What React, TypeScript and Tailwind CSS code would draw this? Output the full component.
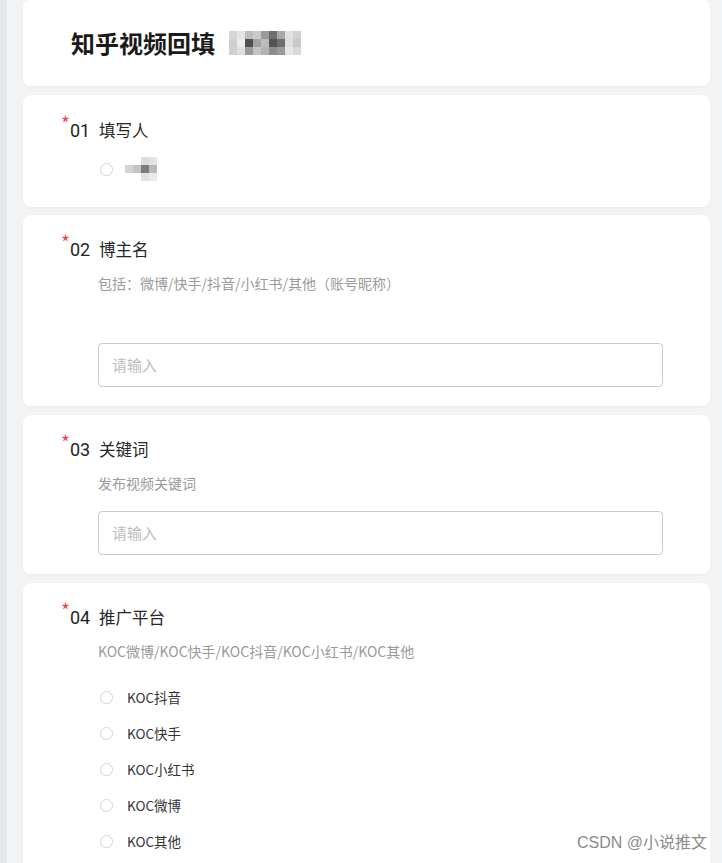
import React from "react";

const cjk = { fontFamily: '"Noto Sans CJK SC", "Noto Sans", sans-serif' };
const num = { fontFamily: 'Roboto, "Noto Sans CJK SC", sans-serif' };

// mosaic blocks standing in for the blurred names
const titleBlur = [
  ["#d6d6d6", "#e4e4e4", "#bdbdbd", "#c9c9c9", "#9a9a9a", "#6f6f6f", "#a8a8a8", "#e0e0e0", "#d2d2d2"],
  ["#cfcfcf", "#ececec", "#4f4f4f", "#a3a3a3", "#bcbcbc", "#545454", "#6e6e6e", "#dedede", "#c8c8c8"],
  ["#d0d0d0", "#dedede", "#9b9b9b", "#c4c4c4", "#b2b2b2", "#8e8e8e", "#9a9a9a", "#e6e6e6", "#d9d9d9"],
];

const nameBlur = [
  ["transparent", "transparent", "#dcdcdc", "#e4e4e4"],
  ["#d4d4d4", "#c4c4c4", "#7d7d7d", "#bababa"],
  ["transparent", "transparent", "#e2e2e2", "#eaeaea"],
];

const Mosaic = ({ rows, size }: { rows: string[][]; size: number }) => (
  <div className="flex flex-col">
    {rows.map((row, i) => (
      <div key={i} className="flex">
        {row.map((c, j) => (
          <div key={j} style={{ width: size, height: size, background: c }} />
        ))}
      </div>
    ))}
  </div>
);

const Radio = () => (
  <span className="w-[13px] h-[13px] rounded-full border border-[#d4d4d4] bg-white shrink-0" />
);

const Title = ({ no, text }: { no: string; text: string }) => (
  <div className="flex items-center h-6 relative">
    <span className="absolute -left-[9px] -top-[5px] text-[#e5484d] text-[19px] leading-none">*</span>
    <span style={num} className="text-[18px] text-[#1f1f1f] w-[29px]">
      {no}
    </span>
    <span className="text-[16.5px] text-[#262626]">{text}</span>
  </div>
);

const Input = () => (
  <div className="ml-[28px] mr-[47px] h-[44px] border border-[#c9cacd] rounded-[4px] flex items-center px-[13px] text-[15px] text-[#bdbdbd]">
    请输入
  </div>
);

const Option = ({ label }: { label: string }) => (
  <div className="h-9 flex items-center ml-[30px] gap-[14px]">
    <Radio />
    <span className="text-[13.5px] text-[#333]">{label}</span>
  </div>
);

const card = "bg-white rounded-[8px] pl-[47px] shadow-[0_1px_3px_rgba(0,0,0,0.03)]";

export default function App() {
  return (
    <div style={cjk} className="w-[722px] h-[863px] overflow-hidden bg-[#f2f3f5] flex relative">
      <div className="w-[7px] bg-[#e6e7e9] shrink-0" />
      <div className="w-[687px] ml-[16px] flex flex-col">
        {/* header */}
        <div className="h-[86px] bg-white rounded-b-[8px] rounded-t-[6px] flex items-center pl-[48px] gap-[14px] shadow-[0_1px_3px_rgba(0,0,0,0.03)]">
          <h1 className="text-[24px] font-bold text-[#1a1a1a]">知乎视频回填</h1>
          <Mosaic rows={titleBlur} size={8} />
        </div>

        {/* 01 */}
        <div className={`mt-[9px] h-[112px] pt-[23px] ${card}`}>
          <Title no="01" text="填写人" />
          <div className="mt-[9px] h-9 flex items-center ml-[30px] gap-[12px]">
            <Radio />
            <Mosaic rows={nameBlur} size={8} />
          </div>
        </div>

        {/* 02 */}
        <div className={`mt-[8px] h-[191px] pt-[22px] ${card}`}>
          <Title no="02" text="博主名" />
          <p className="mt-[12px] ml-[28px] h-5 leading-5 text-[14px] text-[#9a9a9a]">
            包括：微博/快手/抖音/小红书/其他（账号昵称）
          </p>
          <div className="mt-[50px]">
            <Input />
          </div>
        </div>

        {/* 03 */}
        <div className={`mt-[9px] h-[159px] pt-[22px] ${card}`}>
          <Title no="03" text="关键词" />
          <p className="mt-[12px] ml-[28px] h-5 leading-5 text-[14px] text-[#9a9a9a]">发布视频关键词</p>
          <div className="mt-[18px]">
            <Input />
          </div>
        </div>

        {/* 04 */}
        <div className={`mt-[9px] flex-1 pt-[22px] rounded-b-none ${card}`}>
          <Title no="04" text="推广平台" />
          <p className="mt-[12px] ml-[28px] h-5 leading-5 text-[14px] text-[#9a9a9a]">
            KOC微博/KOC快手/KOC抖音/KOC小红书/KOC其他
          </p>
          <div className="mt-[18px] flex flex-col">
            {["KOC抖音", "KOC快手", "KOC小红书", "KOC微博", "KOC其他"].map((o) => (
              <Option key={o} label={o} />
            ))}
          </div>
        </div>
      </div>

      <span
        style={{ fontFamily: '"Liberation Sans", "Noto Sans CJK SC", sans-serif' }}
        className="absolute right-[15px] bottom-[8px] text-[16px] text-[#8a8a8a]"
      >
        CSDN @小说推文
      </span>
    </div>
  );
}
